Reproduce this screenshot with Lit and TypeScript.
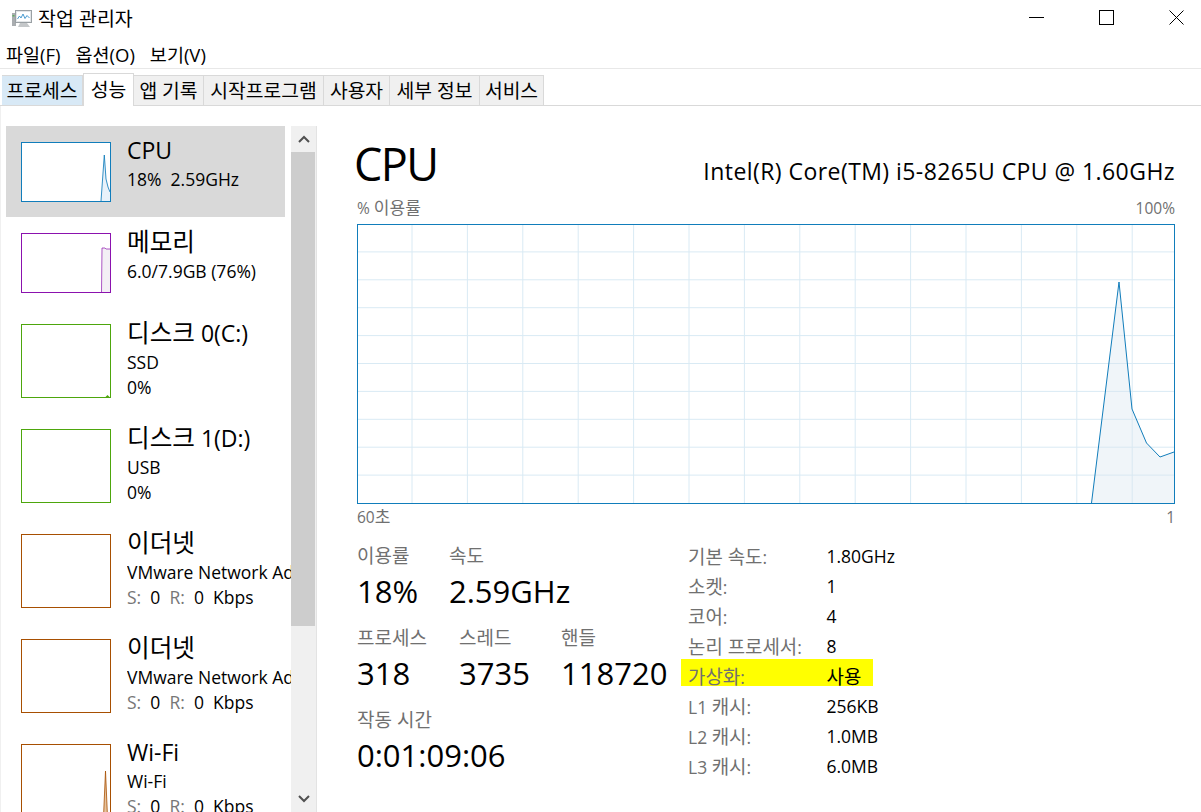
import { LitElement, html, css, svg } from "lit";
import { customElement } from "lit/decorators.js";

type Item = { name: string; l1: string; l2?: string; color: string; h: number; spark?: any; sel?: boolean };

const items: Item[] = [
  { name: "CPU", l1: "18%  2.59GHz", color: "#117dbb", h: 60, sel: true,
    spark: svg`<polygon points="79,58 82.3,12 84,36 86,44 88,49 88,58" fill="#e8f2fa"/><polyline points="79,58 82.3,12 84,36 86,44 88,49" fill="none" stroke="#117dbb" stroke-opacity=".85"/>` },
  { name: "메모리", l1: "6.0/7.9GB (76%)", color: "#8b12ae", h: 60,
    spark: svg`<polygon points="79.5,58 80,14 83,14 84,15 88,15 88,58" fill="#f3eff5"/><polyline points="79.5,58 80,14 83,14 84,15 88,15" fill="none" stroke="#8b12ae" stroke-opacity=".7"/>` },
  { name: "디스크 0(C:)", l1: "SSD", l2: "0%", color: "#4da60c", h: 74,
    spark: svg`<path d="M83.5 72 L85.5 70 L87.5 72Z" fill="#4da60c"/>` },
  { name: "디스크 1(D:)", l1: "USB", l2: "0%", color: "#4da60c", h: 74 },
  { name: "이더넷", l1: "VMware Network Adapter", color: "#a74f01", h: 74, l2: "net" },
  { name: "이더넷", l1: "VMware Network Adapter", color: "#a74f01", h: 74, l2: "net" },
  { name: "Wi-Fi", l1: "Wi-Fi", color: "#a74f01", h: 74, l2: "net",
    spark: svg`<polygon points="81.5,72 83.5,26 85.5,72" fill="#e6c29c" stroke="#a74f01" stroke-width=".8"/>` },
];

const tabs = ["프로세스", "성능", "앱 기록", "시작프로그램", "사용자", "세부 정보", "서비스"];
const tabW = [81, 51, 70, 120, 66, 90, 64];

const specs = [
  ["기본 속도:", "1.80GHz"], ["소켓:", "1"], ["코어:", "4"], ["논리 프로세서:", "8"],
  ["가상화:", "사용"], ["L1 캐시:", "256KB"], ["L2 캐시:", "1.0MB"], ["L3 캐시:", "6.0MB"],
];

/* Hangul renders larger than Latin in the original UI font: wrap Hangul runs so they can be sized apart. */
function ko(text: string) {
  return text.split(/([\uAC00-\uD7A3]+(?: [\uAC00-\uD7A3]+)*)/).map((p, i) =>
    i % 2 ? html`<span class="h">${p}</span>` : p);
}

@customElement("app-root")
export class AppRoot extends LitElement {
  static styles = css`
    :host { display: block; width: 1201px; height: 812px; overflow: hidden; background: #fff; color: #000; font-family: "Open Sans","Noto Sans CJK KR",sans-serif; }
    .h { font-size: 1.08em; }
    .title { height: 38px; display: flex; align-items: center; padding-left: 11px; }
    .title svg.app { width: 22px; height: 20px; margin-right: 5px; margin-top: -1px; }
    .title .t { font-size: 19.5px; line-height: 36px; flex: 1; margin-bottom: 1px; }
    .winbtn { display: flex; gap: 55px; align-items: center; padding: 0 17px 4px 0; }
    .winbtn svg { display: block; }
    .menu { display: flex; align-items: center; gap: 15px; border-bottom: 1px solid #e8e8e8; padding: 2px 0 0 6px; box-sizing: border-box; height: 31px; font-size: 18.5px; }
    .tabs { padding: 6px 0 0 2px; display: flex; align-items: stretch; border-bottom: 1px solid #d9d9d9; height: 30px; }
    .tab { box-sizing: border-box; border: 1px solid #d9d9d9; border-left: none; border-bottom: none; background: #f0f0f0; font-size: 19.3px; line-height: 30px; text-align: center; white-space: nowrap; }
    .tab.hover { background: #d8e9f6; }
    .tab.on { background: #fff; margin-top: -2px; margin-bottom: -1px; line-height: 31px; border-left: 1px solid #d9d9d9; position: relative; }
    .body { display: flex; height: 706px; border-left: 1px solid #f0f0f0; box-sizing: border-box; }
    .side { width: 290px; padding: 20px 0 0 5px; box-sizing: border-box; overflow: hidden; flex: none; }
    .row { display: flex; align-items: flex-start; width: 279px; padding: 16px 0 15px 15px; box-sizing: border-box; }
    .row.sel { background: #d9d9d9; }
    .row .thumb { flex: none; width: 90px; box-sizing: border-box; border: 1px solid; background: #fff; display: block; }
    .row .info { margin: -8px -20px -20px 16px; white-space: nowrap; overflow: hidden; width: 164px; flex: none; }
    .row .n { font-size: 23px; line-height: 33px; }
    .row .n .h { font-size: 1.07em; }
    .row .s { font-size: 17.5px; line-height: 25px; white-space: pre; }
    .row .g { color: #777; }
    .scroll { flex: none; width: 25px; margin-top: 20px; background: #f0f0f0; display: flex; flex-direction: column; border-right: 1px solid #e3e3e3; }
    .scroll .b { height: 26px; display: flex; align-items: center; justify-content: center; }
    .scroll .th { height: 474px; background: #cdcdcd; margin-right: 1px; }
    .scroll .sp { flex: 1; }
    .main { width: 818px; margin-left: 40px; flex: none; padding-top: 28px; }
    .head { display: flex; justify-content: space-between; align-items: flex-end; height: 60px; }
    .head .big { font-size: 45px; line-height: 60px; margin-left: -3px; letter-spacing: -1.6px; }
    .head .model { font-size: 23px; line-height: 30px; margin-bottom: 8px; letter-spacing: .44px; }
    .cap { display: flex; justify-content: space-between; font-size: 15.5px; color: #707070; line-height: 20px; margin-top: 4px; }
    .cap.after { margin-top: 3px; }
    .cap .h { font-size: 1.1em; }
    .chart { display: block; width: 818px; height: 280px; margin-top: 6px; }
    .lower { display: flex; margin-top: 1px; }
    .stats { width: 331px; padding-top: 17px; }
    .lab { font-size: 19px; color: #707070; line-height: 22px; margin-bottom: 3px; }
    .val { font-size: 31px; line-height: 42px; }
    .st { display: flex; margin-bottom: 15px; }
    .st.first > div:nth-child(1) { width: 92px; }
    .st.second > div { width: 102px; }
    .spec { padding-top: 13px; width: 192px; margin-left: -7px; }
    .sr { display: flex; height: 30px; align-items: center; font-size: 17.5px; padding-left: 7px; white-space: nowrap; box-sizing: border-box; }
    .sr.hl { background: #ffff00; height: 27px; margin: -2px 0 5px; padding-top: 6px; }
    .sr .k { width: 138.5px; flex: none; color: #707070; }
  `;

  render() {
    return html`
      <div class="title">
        <svg class="app" viewBox="0 0 22 20">
          <rect x="1" y="4" width="4" height="13" fill="#a9adb0"/>
          <rect x="1.5" y="6" width="2" height="1.5" fill="#5fae5f"/>
          <rect x="4.5" y="1.5" width="16" height="12" fill="#e3e6e8" stroke="#9aa0a4"/>
          <rect x="6" y="3" width="13" height="9" fill="#fff"/>
          <polyline points="6.5,10 8.5,7 10,9 12,5 14,9.5 16,6.5 18.5,9" fill="none" stroke="#4a9bd0"/>
          <path d="M9 14h7l3 4H7z" fill="#c4c7c9"/>
        </svg>
        <span class="t">작업 관리자</span>
        <div class="winbtn">
          <svg width="15" height="15"><path d="M0 7.5h15" stroke="#000"/></svg>
          <svg width="15" height="15"><rect x=".5" y=".5" width="14" height="14" fill="none" stroke="#000"/></svg>
          <svg width="15" height="15"><path d="M.5.5l14 14M14.5.5l-14 14" stroke="#000" fill="none"/></svg>
        </div>
      </div>
      <div class="menu"><span>파일(F)</span><span>옵션(O)</span><span>보기(V)</span></div>
      <div class="tabs">
        ${tabs.map((t, i) => html`<div class="tab ${i === 0 ? "hover" : ""} ${i === 1 ? "on" : ""}" style="width:${tabW[i]}px">${t}</div>`)}
      </div>
      <div class="body">
        <div class="side">
          ${items.map((it) => html`
            <div class="row ${it.sel ? "sel" : ""}">
              <svg class="thumb" style="height:${it.h}px;border-color:${it.color}" viewBox="0 0 88 ${it.h - 2}" width="90" height="${it.h}">${it.spark ?? ""}</svg>
              <div class="info">
                <div class="n">${ko(it.name)}</div>
                <div class="s">${it.l1}</div>
                ${it.l2 === "net"
                  ? html`<div class="s"><span class="g">S:</span>  0  <span class="g">R:</span>  0  Kbps</div>`
                  : it.l2 ? html`<div class="s">${it.l2}</div>` : ""}
              </div>
            </div>`)}
        </div>
        <div class="scroll">
          <div class="b"><svg width="12" height="8"><path d="M1 7l5-5 5 5" fill="none" stroke="#505050" stroke-width="2"/></svg></div>
          <div class="th"></div>
          <div class="sp"></div>
          <div class="b"><svg width="12" height="8"><path d="M1 1l5 5 5-5" fill="none" stroke="#505050" stroke-width="2"/></svg></div>
        </div>
        <div class="main">
          <div class="head"><div class="big">CPU</div><div class="model">Intel(R) Core(TM) i5-8265U CPU @ 1.60GHz</div></div>
          <div class="cap"><span>${ko("% 이용률")}</span><span>100%</span></div>
          ${this.chart()}
          <div class="cap after"><span>${ko("60초")}</span><span>1</span></div>
          <div class="lower">
            <div class="stats">
              <div class="st first"><div><div class="lab">이용률</div><div class="val">18%</div></div><div><div class="lab">속도</div><div class="val">2.59GHz</div></div></div>
              <div class="st second"><div><div class="lab">프로세스</div><div class="val">318</div></div><div><div class="lab">스레드</div><div class="val">3735</div></div><div><div class="lab">핸들</div><div class="val">118720</div></div></div>
              <div><div class="lab">작동 시간</div><div class="val">0:01:09:06</div></div>
            </div>
            <div class="spec">
              ${specs.map(([k, v], i) => html`<div class="sr ${i === 4 ? "hl" : ""}"><span class="k">${ko(k)}</span><span>${ko(v)}</span></div>`)}
            </div>
          </div>
        </div>
      </div>
    `;
  }

  chart() {
    const vs: number[] = [];
    for (let k = 0; k < 14; k++) vs.push(55 + 55.4 * k);
    const hs: number[] = [];
    for (let k = 1; k < 10; k++) hs.push(27.9 * k);
    const pts = "734.5,279 762,58 775,185 789.5,219 803,233 817,228";
    return html`<svg class="chart" viewBox="0 0 818 280">
      ${vs.map((x) => svg`<line x1=${x} x2=${x} y1="0" y2="280" stroke="#d9eaf4"/>`)}
      ${hs.map((y) => svg`<line x1="0" x2="818" y1=${y} y2=${y} stroke="#d9eaf4"/>`)}
      <polygon points="${pts} 817,279" fill="#d9e6f0" fill-opacity=".4"/>
      <polyline points=${pts} fill="none" stroke="#117dbb"/>
      <rect x=".5" y=".5" width="817" height="279" fill="none" stroke="#117dbb"/>
    </svg>`;
  }
}
